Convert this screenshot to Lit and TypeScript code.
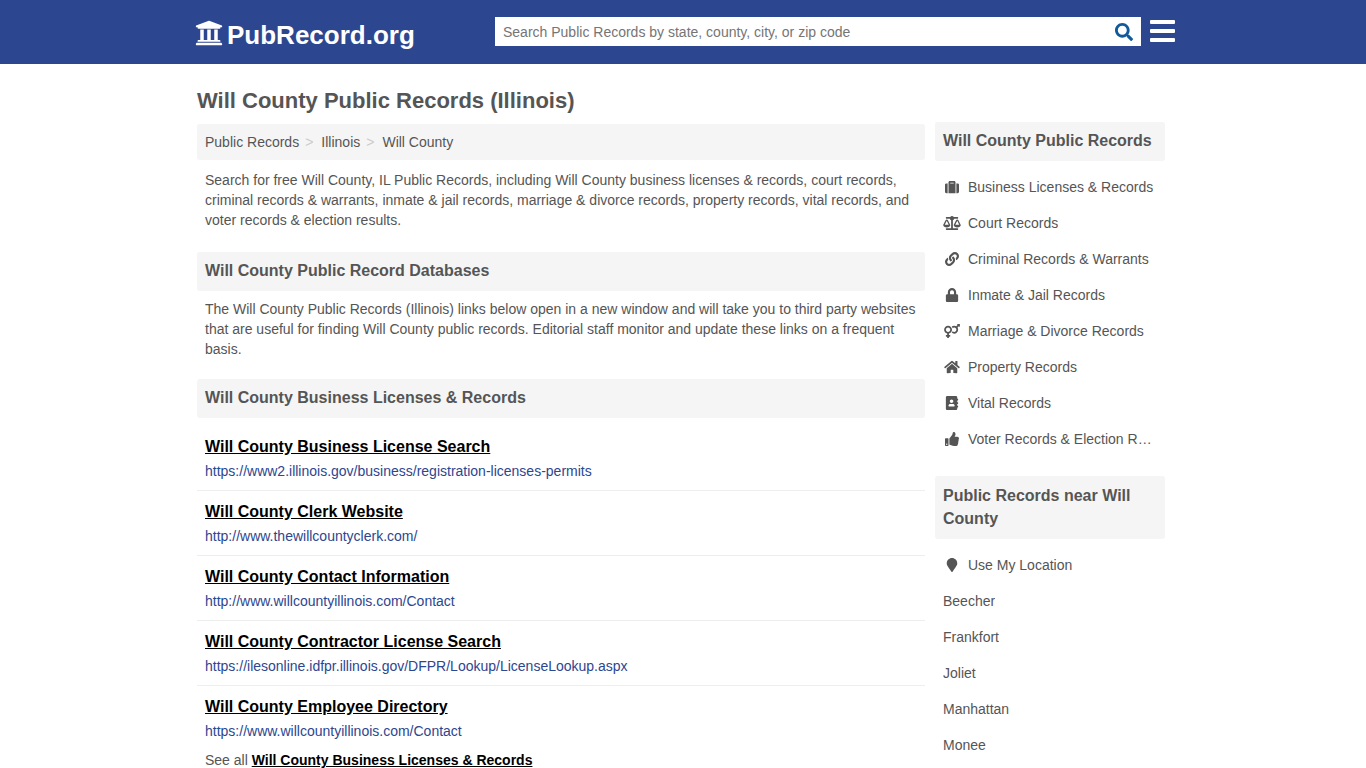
import { LitElement, css, html, svg } from "lit";
import { customElement } from "lit/decorators.js";

// font awesome 5 solid glyphs, [viewBox width, path]
const ICONS: Record<string, [number, string]> = {
  university: [512, "M496 128v16a8 8 0 0 1-8 8h-24v12c0 6.627-5.373 12-12 12H60c-6.627 0-12-5.373-12-12v-12H24a8 8 0 0 1-8-8v-16a8 8 0 0 1 4.941-7.392l232-88a7.996 7.996 0 0 1 6.118 0l232 88A8 8 0 0 1 496 128zm-24 304H40c-13.255 0-24 10.745-24 24v16a8 8 0 0 0 8 8h464a8 8 0 0 0 8-8v-16c0-13.255-10.745-24-24-24zM96 192v192H60c-6.627 0-12 5.373-12 12v20h416v-20c0-6.627-5.373-12-12-12h-36V192h-64v192h-64V192h-64v192h-64V192H96z"],
  search: [512, "M505 442.7L405.3 343c-4.5-4.5-10.6-7-17-7H372c27.6-35.3 44-79.7 44-128C416 93.1 322.9 0 208 0S0 93.1 0 208s93.1 208 208 208c48.3 0 92.7-16.4 128-44v16.3c0 6.4 2.5 12.5 7 17l99.7 99.7c9.4 9.4 24.6 9.4 33.9 0l28.3-28.3c9.4-9.4 9.4-24.6.1-34zM208 336c-70.7 0-128-57.2-128-128 0-70.7 57.2-128 128-128 70.7 0 128 57.2 128 128 0 70.7-57.2 128-128 128z"],
  suitcase: [512, "M128 480h256V80c0-26.5-21.5-48-48-48H176c-26.5 0-48 21.5-48 48v400zm64-384h128v32H192V96zm320 80v256c0 26.5-21.5 48-48 48h-48V128h48c26.5 0 48 21.5 48 48zM96 480H48c-26.5 0-48-21.5-48-48V176c0-26.5 21.5-48 48-48h48v352z"],
  scale: [640, "M256 336h-.02c0-16.18 1.34-8.73-85.05-181.51-17.65-35.29-68.19-35.36-85.87 0C-2.06 328.75.02 320.33.02 336H0c0 44.18 57.31 80 128 80s128-35.82 128-80zM128 176l72 144H56l72-144zm511.98 160c0-16.18 1.34-8.73-85.05-181.51-17.65-35.29-68.19-35.36-85.87 0-87.12 174.26-85.04 165.84-85.04 181.51H384c0 44.18 57.31 80 128 80s128-35.82 128-80h-.02zM440 320l72-144 72 144H440zm88 128H352V153.25c23.51-10.29 41.16-31.48 46.39-57.25H528c8.84 0 16-7.16 16-16V48c0-8.84-7.16-16-16-16H383.64C369.04 12.68 346.09 0 320 0s-49.04 12.68-63.64 32H112c-8.84 0-16 7.16-16 16v32c0 8.84 7.16 16 16 16h129.61c5.23 25.76 22.87 46.96 46.39 57.25V448H112c-8.84 0-16 7.16-16 16v32c0 8.84 7.16 16 16 16h416c8.84 0 16-7.16 16-16v-32c0-8.84-7.16-16-16-16z"],
  link: [512, "M326.612 185.391c59.747 59.809 58.927 155.698.36 214.59-.11.12-.24.25-.36.37l-67.2 67.2c-59.27 59.27-155.699 59.262-214.96 0-59.27-59.26-59.27-155.7 0-214.96l37.106-37.106c9.84-9.84 26.786-3.3 27.294 10.606.648 17.722 3.826 35.527 9.69 52.721 1.986 5.822.567 12.262-3.783 16.612l-13.087 13.087c-28.026 28.026-28.905 73.66-1.155 101.96 28.024 28.579 74.086 28.749 102.325.51l67.2-67.19c28.191-28.191 28.073-73.757 0-101.83-3.701-3.694-7.429-6.564-10.341-8.569a16.037 16.037 0 0 1-6.947-12.606c-.396-10.567 3.348-21.456 11.698-29.806l21.054-21.055c5.521-5.521 14.182-6.199 20.584-1.731a152.482 152.482 0 0 1 20.522 17.197zM467.547 44.449c-59.261-59.262-155.69-59.27-214.96 0l-67.2 67.2c-.12.12-.25.25-.36.37-58.566 58.892-59.387 154.781.36 214.59a152.454 152.454 0 0 0 20.521 17.196c6.402 4.468 15.064 3.789 20.584-1.731l21.054-21.055c8.35-8.35 12.094-19.239 11.698-29.806a16.037 16.037 0 0 0-6.947-12.606c-2.912-2.005-6.64-4.875-10.341-8.569-28.073-28.073-28.191-73.639 0-101.83l67.2-67.19c28.239-28.239 74.3-28.069 102.325.51 27.75 28.3 26.872 73.934-1.155 101.96l-13.087 13.087c-4.35 4.35-5.769 10.79-3.783 16.612 5.864 17.194 9.042 34.999 9.69 52.721.509 13.906 17.454 20.446 27.294 10.606l37.106-37.106c59.271-59.259 59.271-155.699.001-214.959z"],
  lock: [448, "M400 224h-24v-72C376 68.2 307.8 0 224 0S72 68.2 72 152v72H48c-26.5 0-48 21.5-48 48v192c0 26.5 21.5 48 48 48h352c26.5 0 48-21.5 48-48V272c0-26.5-21.5-48-48-48zm-104 0H152v-72c0-39.7 32.3-72 72-72s72 32.3 72 72v72z"],
  venus: [576, "M564 0h-79c-10.7 0-16 12.9-8.5 20.5l16.9 16.9-48.7 48.7C422.5 72.1 396.2 64 368 64c-33.7 0-64.6 11.6-89.2 30.9 14 16.7 25 36 32.1 57.1 14.5-14.8 34.7-24 57.1-24 44.1 0 80 35.9 80 80s-35.9 80-80 80c-22.3 0-42.6-9.2-57.1-24-7.1 21.1-18 40.4-32.1 57.1 24.5 19.4 55.5 30.9 89.2 30.9 79.5 0 144-64.5 144-144 0-28.2-8.1-54.5-22.1-76.7l48.7-48.7 16.9 16.9c2.4 2.4 5.4 3.5 8.4 3.5 6.2 0 12.1-4.8 12.1-12V12c0-6.6-5.4-12-12-12zM144 64C64.5 64 0 128.5 0 208c0 68.5 47.9 125.9 112 140.4V400H76c-6.6 0-12 5.4-12 12v40c0 6.6 5.4 12 12 12h36v36c0 6.6 5.4 12 12 12h40c6.6 0 12-5.4 12-12v-36h36c6.6 0 12-5.4 12-12v-40c0-6.6-5.4-12-12-12h-36v-51.6c64.1-14.6 112-71.9 112-140.4 0-79.5-64.5-144-144-144zm0 224c-44.1 0-80-35.9-80-80s35.9-80 80-80 80 35.9 80 80-35.9 80-80 80z"],
  home: [576, "M280.37 148.26L96 300.11V464a16 16 0 0 0 16 16l112.06-.29a16 16 0 0 0 15.92-16V368a16 16 0 0 1 16-16h64a16 16 0 0 1 16 16v95.64a16 16 0 0 0 16 16.05L464 480a16 16 0 0 0 16-16V300L295.67 148.26a12.19 12.19 0 0 0-15.3 0zM571.6 251.47L488 182.56V44.05a12 12 0 0 0-12-12h-56a12 12 0 0 0-12 12v72.61L318.47 43a48 48 0 0 0-61 0L4.34 251.47a12 12 0 0 0-1.6 16.9l25.5 31A12 12 0 0 0 45.15 301l235.22-193.74a12.19 12.19 0 0 1 15.3 0L530.9 301a12 12 0 0 0 16.9-1.6l25.5-31a12 12 0 0 0-1.7-16.93z"],
  book: [448, "M436 160c6.6 0 12-5.4 12-12v-40c0-6.6-5.4-12-12-12h-20V48c0-26.5-21.5-48-48-48H48C21.5 0 0 21.5 0 48v416c0 26.5 21.5 48 48 48h320c26.5 0 48-21.5 48-48v-48h20c6.6 0 12-5.4 12-12v-40c0-6.6-5.4-12-12-12h-20v-64h20c6.6 0 12-5.4 12-12v-40c0-6.6-5.4-12-12-12h-20v-64h20zm-228-32c35.3 0 64 28.7 64 64s-28.7 64-64 64-64-28.7-64-64 28.7-64 64-64zm112 236.8c0 10.6-10 19.2-22.4 19.2H118.4C106 384 96 375.4 96 364.8v-19.2c0-31.8 30.1-57.6 67.2-57.6h5c12.3 5.1 25.7 8 39.8 8s27.6-2.9 39.8-8h5c37.1 0 67.2 25.8 67.2 57.6v19.2z"],
  thumb: [512, "M104 224H24c-13.255 0-24 10.745-24 24v240c0 13.255 10.745 24 24 24h80c13.255 0 24-10.745 24-24V248c0-13.255-10.745-24-24-24zM64 472c-13.255 0-24-10.745-24-24s10.745-24 24-24 24 10.745 24 24-10.745 24-24 24zM384 81.452c0 42.416-25.97 66.208-33.277 94.548h101.723c33.397 0 59.397 27.746 59.553 58.098.084 17.938-7.546 37.249-19.439 49.197l-.11.11c9.836 23.337 8.237 56.037-9.308 79.469 8.681 25.895-.069 57.704-16.382 74.757 4.298 17.598 2.244 32.575-6.148 44.632C440.202 511.587 389.616 512 346.839 512l-2.845-.001c-48.287-.017-87.806-17.598-119.56-31.725-15.957-7.099-36.821-15.887-52.651-16.178-6.54-.12-11.783-5.457-11.783-11.998v-213.77c0-3.2 1.282-6.271 3.558-8.521 39.614-39.144 56.648-80.587 89.117-113.111 14.804-14.832 20.188-37.236 25.393-58.902C282.515 39.293 291.817 0 312 0c24 0 72 8 72 81.452z"],
  marker: [384, "M172.268 501.67C26.97 291.031 0 269.413 0 192 0 85.961 85.961 0 192 0s192 85.961 192 192c0 77.413-26.97 99.031-172.268 309.67-9.535 13.774-29.93 13.773-39.464 0z"],
};

const icon = (name: string, cls = "") => {
  const [w, d] = ICONS[name];
  return html`<svg class=${cls} viewBox="0 0 ${w} 512" fill="currentColor">${svg`<path d=${d}></path>`}</svg>`;
};

const LINKS = [
  ["Will County Business License Search", "https://www2.illinois.gov/business/registration-licenses-permits"],
  ["Will County Clerk Website", "http://www.thewillcountyclerk.com/"],
  ["Will County Contact Information", "http://www.willcountyillinois.com/Contact"],
  ["Will County Contractor License Search", "https://ilesonline.idfpr.illinois.gov/DFPR/Lookup/LicenseLookup.aspx"],
  ["Will County Employee Directory", "https://www.willcountyillinois.com/Contact"],
];

const MENU = [
  ["suitcase", "Business Licenses & Records"],
  ["scale", "Court Records"],
  ["link", "Criminal Records & Warrants"],
  ["lock", "Inmate & Jail Records"],
  ["venus", "Marriage & Divorce Records"],
  ["home", "Property Records"],
  ["book", "Vital Records"],
  ["thumb", "Voter Records & Election Results"],
];

const NEARBY = ["Beecher", "Frankfort", "Joliet", "Manhattan", "Monee"];

@customElement("app-root")
export class AppRoot extends LitElement {
  static styles = css`
    :host {
      display: block;
      height: 768px;
      overflow: hidden;
      background: #fff;
      color: #555;
      font-family: "Liberation Sans", Arial, sans-serif;
      font-size: 14px;
      line-height: 20px;
    }
    a { color: inherit; text-decoration: none; }
    .topbar { height: 64px; background: #2d4690; }
    .wrap { width: 968px; margin-left: 197px; }
    .topbar .wrap { display: flex; align-items: center; height: 64px; }
    .logo {
      flex: none;
      display: flex;
      align-items: center;
      width: 300px;
      margin-left: -2px;
      color: #fff;
      font-size: 26px;
      font-weight: 700;
      line-height: 32px;
      padding-top: 5px;
      box-sizing: border-box;
    }
    .logo svg { width: 28px; height: 32px; margin-right: 4px; margin-top: -3px; }
    .search {
      flex: none;
      display: flex;
      align-items: center;
      justify-content: space-between;
      width: 646px;
      height: 29px;
      margin-top: -1px;
      padding: 0 8px;
      box-sizing: border-box;
      background: #fff;
      color: #757575;
    }
    .search svg { width: 18px; height: 18px; color: #0e5a9c; margin-top: 1px; }
    .burger { flex: none; width: 25px; height: 22px; margin: -3px 0 0 9px; display: flex; flex-direction: column; justify-content: space-between; }
    .burger i { display: block; height: 4px; background: #fff; border-radius: 1px; }
    h1 { margin: 0; padding: 24px 0 11px; font-size: 22px; line-height: 25px; color: #555; font-weight: 700; }
    .cols { display: flex; gap: 10px; align-items: flex-start; }
    .main { width: 728px; flex: none; }
    .side { width: 230px; flex: none; margin-top: -2px; }
    .crumbs {
      display: flex;
      align-items: center;
      height: 36px;
      padding: 0 8px;
      border-radius: 3px;
      background: #f5f5f5;
    }
    .crumbs span { color: #ccc; margin: 0 8px 0 6px; }
    p { margin: 0; padding: 0 8px; }
    .intro { padding-top: 10px; padding-bottom: 22px; }
    .sub { padding-top: 8px; padding-bottom: 20px; }
    .bar {
      margin: 0;
      padding: 7px 8px 9px;
      border-radius: 3px;
      background: #f5f5f5;
      color: #555;
      font-size: 16px;
      font-weight: 700;
      line-height: 23px;
    }
    .bar.two { padding-top: 8px; }
    .links { padding-top: 15px; }
    .item { height: 58px; margin-bottom: 7px; padding: 2px 8px 0; box-sizing: border-box; border-bottom: 1px solid #eee; }
    .item:last-child { border-bottom: 0; height: 57px; margin-bottom: 0; }
    .item b { display: block; color: #000; font-size: 16px; line-height: 24px; text-decoration: underline; }
    .item a { display: block; color: #2d4690; line-height: 20px; margin-top: 2px; }
    .all { padding: 0 8px; line-height: 20px; }
    .all a { color: #000; font-weight: 700; text-decoration: underline; }
    .menu { padding: 8px 0 19px; }
    .menu a { display: flex; align-items: center; height: 36px; padding: 0 8px; }
    .menu .ico { flex: none; width: 25px; display: flex; align-items: center; justify-content: flex-start; }
    .menu svg { height: 14px; width: 18px; color: #555; }
    .menu span { overflow: hidden; white-space: nowrap; text-overflow: ellipsis; }
  `;

  render() {
    return html`
      <header class="topbar">
        <div class="wrap">
          <a class="logo">${icon("university")}PubRecord.org</a>
          <div class="search">
            <span>Search Public Records by state, county, city, or zip code</span>
            ${icon("search")}
          </div>
          <div class="burger"><i></i><i></i><i></i></div>
        </div>
      </header>
      <div class="wrap">
        <h1>Will County Public Records (Illinois)</h1>
        <div class="cols">
          <main class="main">
            <nav class="crumbs">
              <a>Public Records</a><span>&gt;</span><a>Illinois</a><span>&gt;</span><a>Will County</a>
            </nav>
            <p class="intro">Search for free Will County, IL Public Records, including Will County business licenses &amp; records, court records, criminal records &amp; warrants, inmate &amp; jail records, marriage &amp; divorce records, property records, vital records, and voter records &amp; election results.</p>
            <h2 class="bar">Will County Public Record Databases</h2>
            <p class="sub">The Will County Public Records (Illinois) links below open in a new window and will take you to third party websites that are useful for finding Will County public records. Editorial staff monitor and update these links on a frequent basis.</p>
            <h2 class="bar">Will County Business Licenses &amp; Records</h2>
            <div class="links">
              ${LINKS.map(([t, u]) => html`<div class="item"><b>${t}</b><a>${u}</a></div>`)}
            </div>
            <div class="all">See all <a>Will County Business Licenses &amp; Records</a></div>
          </main>
          <aside class="side">
            <h3 class="bar">Will County Public Records</h3>
            <div class="menu">
              ${MENU.map(([i, t]) => html`<a><div class="ico">${icon(i)}</div><span>${t}</span></a>`)}
            </div>
            <h3 class="bar two">Public Records near Will County</h3>
            <div class="menu">
              <a><div class="ico">${icon("marker")}</div><span>Use My Location</span></a>
              ${NEARBY.map((t) => html`<a><span>${t}</span></a>`)}
            </div>
          </aside>
        </div>
      </div>
    `;
  }
}
